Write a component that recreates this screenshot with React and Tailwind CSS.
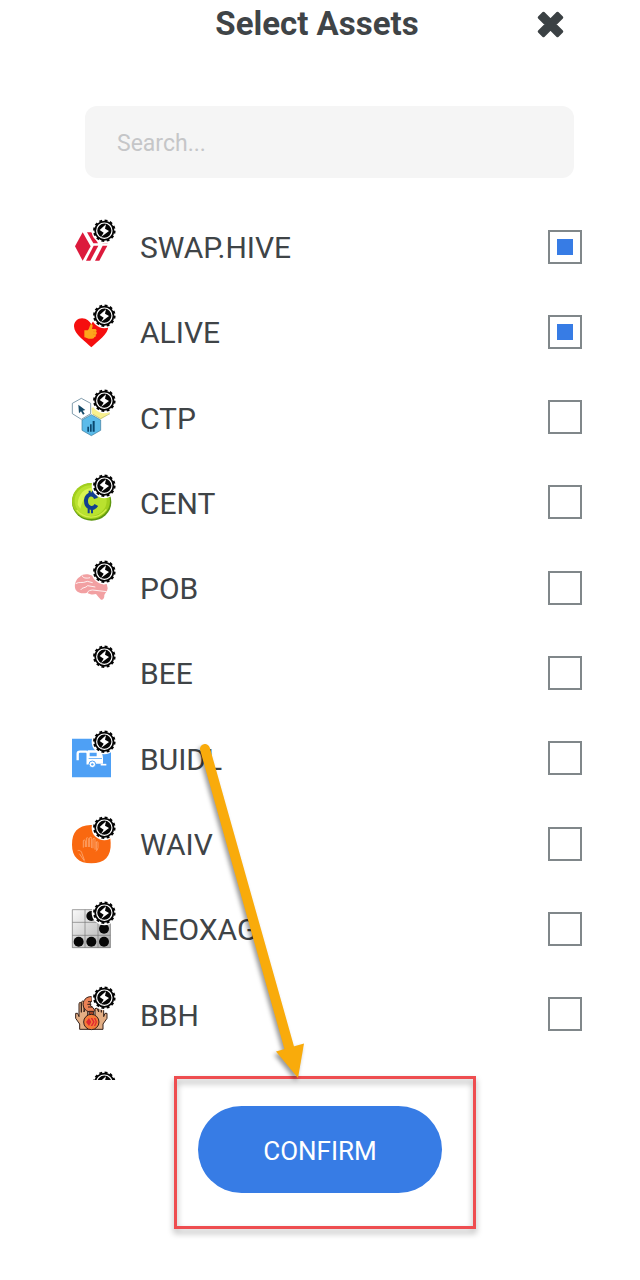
import { useState } from "react";

function Badge() {
  return (
    <g>
      <circle cx="133" cy="61" r="38" fill="#fff" />
      <circle cx="133" cy="61" r="30" fill="#050505" />
      <circle cx="133" cy="61" r="30.5" fill="none" stroke="#050505" strokeWidth="6.5" strokeDasharray="8.5 7.47" />
      <circle cx="133" cy="61" r="23" fill="none" stroke="#fff" strokeWidth="3.5" />
      <path d="M138 42 L119 59 L131 67 L123 80 L147 62 L135 55 Z" fill="#fff" />
    </g>
  );
}

function HiveArt() {
  return (
    <g fill="#dc1a3c">
      <path d="M68 66 L45 108 L68 151 L92 108 Z" />
      <path d="M81 66 H94 L114 99 H100 Z" />
      <path d="M101 106 H115 L91 151 H78 Z" />
      <path d="M107 66 H120 L143 99 H128 Z" />
      <path d="M128 106 H142 L118 151 H105 Z" />
    </g>
  );
}

function AliveArt() {
  return (
    <g>
      <path d="M94 156 C78 140 42 117 42 93 C42 79 53 69 66 69 C80 69 90 79 94 87 C99 76 110 69 121 69 C134 69 145 80 145 93 C145 117 111 140 94 156 Z" fill="#f50f0f" />
      <path d="M73 105 H83 C88 101 88 94 91 88 C94 84 98 87 98 92 L96 101 H105 C110 101 111 107 108 109 C112 112 111 117 107 118 C109 122 106 125 103 125 C103 129 100 130 96 130 H86 C80 130 79 126 73 126 Z" fill="#fda61c" />
      <path d="M99 109 H107 M99 117 H106" stroke="#ee8a12" strokeWidth="1.5" />
    </g>
  );
}

function CtpArt() {
  return (
    <g>
      <path d="M95 83 L122 68 L150 98 L123 117 L96 101 Z" fill="#f8f08e" />
      <path d="M99 102 L122 115 L150 100" fill="none" stroke="#b1b468" strokeWidth="2" />
      <path d="M64 54 L92 69 V100 L64 117 L37 100 V69 Z" fill="#fff" stroke="#426b83" strokeWidth="2" />
      <path d="M94 103 L122 119 V150 L94 166 L66 150 V119 Z" fill="#5bbbea" stroke="#3a7898" strokeWidth="2" />
      <path d="M55 73 L57 99 L63 93 L69 103 L74 100 L68 91 L76 89 Z" fill="#164a68" />
      <path d="M82 154 V139 H87 V154 Z M90 154 V132 H95 V154 Z M98 154 V122 H104 V154 Z" fill="#0b4870" />
    </g>
  );
}

function CentArt() {
  return (
    <g>
      <ellipse cx="95" cy="110" rx="59" ry="56" fill="#5f9810" />
      <ellipse cx="93" cy="107" rx="57" ry="54" fill="#a2cf1d" />
      <ellipse cx="92" cy="106" rx="48" ry="46" fill="#b9e22f" />
      <path d="M53 118 C54 84 77 64 110 67 C87 79 69 95 61 130 Z" fill="#d9f552" />
      <path d="M50 134 C70 160 113 165 139 132" fill="none" stroke="#d3ef4c" strokeWidth="4" />
      <path d="M108 99 C103 82 81 83 78 104 C77 130 101 134 109 119" fill="none" stroke="#123f8f" strokeWidth="12" />
      <path d="M89 76 V88 M99 76 V88 M86 130 V144 M96 130 V144" stroke="#123f8f" strokeWidth="6" />
    </g>
  );
}

function PobArt() {
  return (
    <g>
      <path d="M60 76 C68 66 87 67 98 74 L119 83 C137 83 141 96 143 111 C142 121 136 125 133 131 C134 141 128 147 123 145 C117 139 112 134 108 128 C98 131 89 129 81 124 C71 128 54 126 47 115 C41 101 47 83 60 76 Z" fill="#f2a0a2" />
      <path d="M47 97 C58 90 66 97 82 90 L98 94 M66 72 C67 80 79 82 90 79 M62 116 C66 107 77 111 83 103 L106 107 M82 125 C84 117 92 117 98 116 L140 121 M116 92 L133 99" fill="none" stroke="#fff" strokeWidth="2.5" />
    </g>
  );
}

function BuidlArt() {
  return (
    <g>
      <path d="M36 52 H153 V168 H36 Z" fill="#4ea0f5" />
      <path d="M53 117 V97 Q53 91 60 91 H78 Q83 91 83 98 V126 H90" fill="none" stroke="#fff" strokeWidth="7" />
      <path d="M83 87 H117 Q127 90 129 110 V127 H83 Z" fill="#fff" />
      <path d="M89 94 H110 V105 H89 Z M86 110 H126 V112 H86 Z" fill="#4ea0f5" />
      <path d="M122 130 H139" stroke="#fff" strokeWidth="5" />
      <circle cx="97" cy="129" r="10" fill="#fff" stroke="#4ea0f5" strokeWidth="3" />
      <circle cx="97" cy="129" r="3.5" fill="#4ea0f5" />
    </g>
  );
}

function WaivArt() {
  return (
    <g>
      <path d="M92 53 C132 51 152 69 152 106 C154 147 134 168 94 168 C56 168 36 148 36 112 C36 74 53 55 92 53 Z" fill="#f96810" />
      <path d="M70 121 V100 Q73 94 76 101 V119 M79 119 V93 Q82 88 85 94 V119 M89 119 V91 Q93 86 95 93 V122 M99 123 V95 Q103 90 105 96 V127 M109 128 V104 Q112 100 114 106 V121 Q113 128 108 132 M53 130 C60 127 65 133 66 139 L73 158 M58 139 L74 162" fill="none" stroke="#ffc49c" strokeWidth="1.8" />
    </g>
  );
}

function NeoxagArt() {
  return (
    <g>
      <defs>
        <linearGradient id="tile" x1="0" y1="0" x2="1" y2="1">
          <stop offset="0" stopColor="#fafafa" />
          <stop offset="1" stopColor="#a9a9a9" />
        </linearGradient>
      </defs>
      <path d="M36 51 H152 V167 H36 Z" fill="url(#tile)" />
      <path d="M37 52 H151 V166 H37 Z M75 52 V166 M114 52 V166 M37 90 H151 M37 129 H151" fill="none" stroke="#777" strokeWidth="2" />
      <g fill="#080808">
        <circle cx="94" cy="71" r="15" />
        <circle cx="132" cy="109" r="15" />
        <circle cx="56" cy="148" r="15" />
        <circle cx="94" cy="148" r="15" />
        <circle cx="132" cy="148" r="15" />
      </g>
    </g>
  );
}

function BbhArt() {
  return (
    <g stroke="#35211a" strokeWidth="3" strokeLinejoin="round">
      <path d="M59 156 V140 L47 123 V108 L53 108 L57 118 V78 Q60 72 64 78 V105 V74 Q68 68 72 75 V104 L77 88 L83 91 V117 L91 128 V156 Z" fill="#e3ae84" />
      <path d="M129 156 V140 L141 123 V108 L135 108 L131 118 V80 Q128 74 124 80 V105 V78 Q120 70 116 78 V104 L111 92 L105 94 V117 L97 128 V156 Z" fill="#e3ae84" />
      <path d="M95 58 A23 23 0 1 0 105 100 L98 90 A11 11 0 0 1 96 70 Z" fill="#ec8155" />
      <path d="M84 73 H95 M82 81 H94 M84 89 H98" fill="none" />
      <path d="M87 102 H101 V113 H87 Z" fill="#a34427" />
      <circle cx="94" cy="134" r="23" fill="#f47b38" />
      <g stroke="none" fill="#df2831">
        <path d="M78 134 L87 122 L94 134 L87 146 Z" />
        <path d="M92 122 H97 L104 134 L97 146 H92 L99 134 Z" />
        <path d="M102 122 H106 L111 134 L106 146 H102 L107 134 Z" />
      </g>
    </g>
  );
}

const assets = [
  { name: "SWAP.HIVE", Art: HiveArt, on: true },
  { name: "ALIVE", Art: AliveArt, on: true },
  { name: "CTP", Art: CtpArt },
  { name: "CENT", Art: CentArt },
  { name: "POB", Art: PobArt },
  { name: "BEE" },
  { name: "BUIDL", Art: BuidlArt },
  { name: "WAIV", Art: WaivArt },
  { name: "NEOXAG", Art: NeoxagArt },
  { name: "BBH", Art: BbhArt },
];

function TokenIcon({ Art }) {
  return (
    <svg viewBox="30 23 144 174" className="h-[58px] w-12 shrink-0" aria-hidden="true">
      {Art && <Art />}
      <Badge />
    </svg>
  );
}

function AssetRow({ name, Art, on }) {
  const [checked, setChecked] = useState(Boolean(on));
  return (
    <li>
      <label className="flex h-full items-center">
        <TokenIcon Art={Art} />
        <span className="ml-[22px] grow pt-[3px] text-[30px] leading-9">{name}</span>
        <input
          type="checkbox"
          checked={checked}
          onChange={() => setChecked(!checked)}
          className="grid size-[34px] shrink-0 appearance-none place-items-center border-2 border-[#80878a] bg-white before:size-4 checked:before:bg-[#377ce5]"
        />
      </label>
    </li>
  );
}

function Arrow() {
  return (
    <svg viewBox="0 0 120 350" className="pointer-events-none absolute top-[738px] left-[190px] h-[350px] w-[120px] drop-shadow-[-2px_3px_2px_rgba(0,0,0,0.4)]" aria-hidden="true">
      <path d="M15 11 L99 309" stroke="#f9ab0b" strokeWidth="10" strokeLinecap="round" />
      <path d="M86 313.500 L114 305.500 L108 340 Z" fill="#f9ab0b" />
    </svg>
  );
}

export default function App() {
  return (
    <main className="relative min-h-screen bg-white font-['Roboto',sans-serif] text-[#3f4447]">
      <header className="grid h-12 grid-cols-[1fr_auto_1fr] items-center pr-[76px] pl-[70px]">
        <h1 className="col-start-2 text-[33px] leading-10 font-bold">Select Assets</h1>
        <button type="button" aria-label="Close" className="justify-self-end">
          <svg viewBox="0 0 27 27" className="size-[27px]" aria-hidden="true">
            <path
              d="M2 6.500 L6.500 2 L13.500 9 L20.500 2 L25 6.500 L18 13.500 L25 20.500 L20.500 25 L13.500 18 L6.500 25 L2 20.500 L9 13.500 Z"
              fill="#3b4144"
              stroke="#3b4144"
              strokeWidth="2.500"
              strokeLinejoin="round"
            />
          </svg>
        </button>
      </header>

      <div className="mt-[58px] mr-[66px] ml-[85px]">
        <input
          type="search"
          aria-label="Search assets"
          placeholder="Search..."
          className="block h-[72px] w-full rounded-xl bg-[#f5f5f5] px-8 pt-0.5 text-[23px] outline-none placeholder:text-[#c5c6c8]"
        />
      </div>

      <div className="mt-[26px] h-[876px] overflow-hidden pr-[58px] pl-[70px]">
        <ul className="grid h-[938px] auto-rows-fr">
          {assets.map((asset) => (
            <AssetRow key={asset.name} {...asset} />
          ))}
          <li className="flex items-center">
            <TokenIcon />
          </li>
        </ul>
      </div>

      <div className="flex justify-center pt-[26px] pb-[87px]">
        <div className="relative">
          <button type="button" className="h-[87px] w-[244px] rounded-full bg-[#377ce5] pt-1 text-[26px] text-white">
            CONFIRM
          </button>
          <div className="pointer-events-none absolute -top-[30px] -right-[34px] -bottom-9 -left-6 border-3 border-[#ee4d50] drop-shadow-[0_4px_3px_rgba(0,0,0,0.35)]" />
        </div>
      </div>
      <Arrow />
    </main>
  );
}
